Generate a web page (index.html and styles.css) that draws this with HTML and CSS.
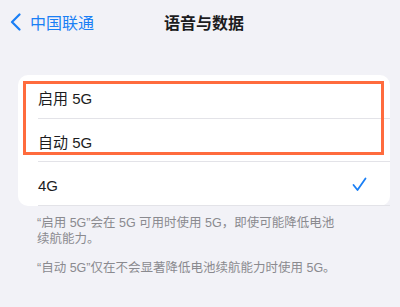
FILE: index.html
```html
<!DOCTYPE html>
<html lang="zh-CN">

<head>
    <meta charset="UTF-8">
    <meta name="viewport" content="width=device-width, initial-scale=1.0">
    <title>语音与数据</title>
    <link rel="stylesheet" href="styles.css">
</head>

<body>

    <!-- Top navigation bar -->
    <div class="nav-bar">
        <a class="back-link" href="#">
            <svg class="back-icon" width="11" height="18" viewBox="0 0 11 18">
                <path d="M9.5 1.5 L2 9 L9.5 16.5" fill="none" stroke="#1a7ff5" stroke-width="2.2" stroke-linecap="round" stroke-linejoin="round" />
            </svg>
            中国联通
        </a>
        <div class="nav-title">语音与数据</div>
    </div>

    <!-- Option list -->
    <div class="card">
        <div class="row">启用 5G</div>
        <div class="row">自动 5G</div>
        <div class="row">
            <span>4G</span>
            <svg class="check-icon" width="15" height="15" viewBox="0 0 15 15">
                <path d="M1.5 8 L5.5 13 L13.5 1.5" fill="none" stroke="#1a7ff5" stroke-width="1.8" stroke-linecap="round" stroke-linejoin="round" />
            </svg>
        </div>
        <!-- Highlight box drawn over the first two rows -->
        <div class="highlight"></div>
    </div>

    <!-- Footnotes under the list -->
    <div class="notes">
        <p class="note">“启用 5G”会在 5G 可用时使用 5G，即使可能降低电池续航能力。</p>
        <p class="note">“自动 5G”仅在不会显著降低电池续航能力时使用 5G。</p>
    </div>

</body>

</html>
```

FILE: styles.css
```css
/* Reset */
* {
    margin: 0;
    padding: 0;
    box-sizing: border-box;
}

body {
    width: 400px;
    height: 307px;
    overflow: hidden;
    background: #f2f2f7;
    font-family: "Liberation Sans", "Noto Sans CJK SC", sans-serif;
    color: #1c1c1e;
}

/* Navigation bar */
.nav-bar {
    height: 44px;
    display: flex;
    align-items: center;
    position: relative;
}

.back-link {
    display: flex;
    align-items: center;
    gap: 9px;
    padding-left: 10px;
    font-size: 16px;
    color: #1a7ff5;
    text-decoration: none;
}

.nav-title {
    position: absolute;
    left: 0;
    right: 0;
    text-align: center;
    padding-left: 8px;
    font-size: 16px;
    font-weight: bold;
    pointer-events: none;
}

/* List card */
.card {
    position: relative;
    margin: 31px 10px 0 18px;
    background: #fff;
    border-radius: 10px;
    padding-left: 20px;
}

.row {
    height: 43.7px;
    display: flex;
    align-items: center;
    justify-content: space-between;
    padding: 3px 23px 0 0;
    font-size: 15px;
    border-bottom: 1px solid #e3e3e8;
}

.row:last-of-type {
    border-bottom: none;
}

.check-icon {
    margin-top: -2px;
}

/* Orange annotation box */
.highlight {
    position: absolute;
    left: 5px;
    top: 6px;
    width: 361px;
    height: 74px;
    border: 3px solid #ff6b3d;
}

/* Footnotes */
.notes {
    padding: 9px 60px 0 37px;
}

.note {
    font-size: 12.5px;
    line-height: 16px;
    color: #8a8a8f;
    margin-bottom: 13px;
}
```
